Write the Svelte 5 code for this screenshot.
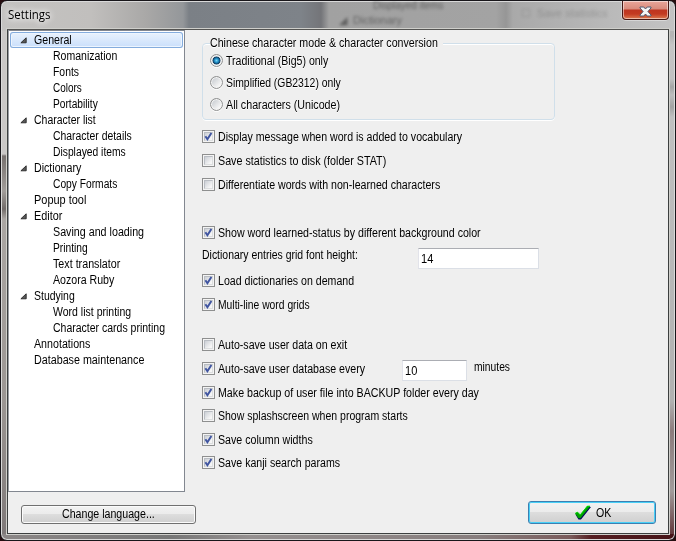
<script>
  const tree = [
    { t: 'General', w: 38, open: true, sel: true },
    { t: 'Romanization', w: 64, sub: true },
    { t: 'Fonts', w: 26, sub: true },
    { t: 'Colors', w: 29, sub: true },
    { t: 'Portability', w: 45, sub: true },
    { t: 'Character list', w: 62, open: true },
    { t: 'Character details', w: 79, sub: true },
    { t: 'Displayed items', w: 73, sub: true },
    { t: 'Dictionary', w: 47, open: true },
    { t: 'Copy Formats', w: 64, sub: true },
    { t: 'Popup tool', w: 52 },
    { t: 'Editor', w: 28, open: true },
    { t: 'Saving and loading', w: 91, sub: true },
    { t: 'Printing', w: 35, sub: true },
    { t: 'Text translator', w: 67, sub: true },
    { t: 'Aozora Ruby', w: 61, sub: true },
    { t: 'Studying', w: 41, open: true },
    { t: 'Word list printing', w: 78, sub: true },
    { t: 'Character cards printing', w: 112, sub: true },
    { t: 'Annotations', w: 56 },
    { t: 'Database maintenance', w: 110 }
  ];
  const modes = [
    { t: 'Traditional (Big5) only', w: 102, on: true },
    { t: 'Simplified (GB2312) only', w: 115 },
    { t: 'All characters (Unicode)', w: 114 }
  ];
  const sections = [
    [
      { t: 'Display message when word is added to vocabulary', w: 244, on: true },
      { t: 'Save statistics to disk (folder STAT)', w: 168 },
      { t: 'Differentiate words with non-learned characters', w: 222 }
    ],
    [
      { t: 'Show word learned-status by different background color', w: 263, on: true },
      { t: 'Dictionary entries grid font height:', w: 156, plain: true, value: '14', vw: 12 },
      { t: 'Load dictionaries on demand', w: 136, on: true },
      { t: 'Multi-line word grids', w: 92, on: true }
    ],
    [
      { t: 'Auto-save user data on exit', w: 129 },
      { t: 'Auto-save user database every', w: 147, on: true, value: '10', vw: 12, unit: 'minutes' },
      { t: 'Make backup of user file into BACKUP folder every day', w: 261, on: true, tight: true },
      { t: 'Show splashscreen when program starts', w: 190 },
      { t: 'Save column widths', w: 95, on: true, tight: true },
      { t: 'Save kanji search params', w: 122, on: true }
    ]
  ];

  // Condenses a label horizontally to its bitmap-font width.
  function fit(node, width) {
    node.style.transform = `scaleX(${width / node.offsetWidth})`;
  }
</script>

{#snippet label(t, w)}
  <span class="label" style="width:{w}px"><span class="ink" use:fit={w}>{t}</span></span>
{/snippet}

<div class="window">
  <header>
    <span class="title">{@render label('Settings', 43)}</span>
    <span class="ghost g1">Displayed items</span>
    <span class="ghost g2">◢&nbsp; Dictionary</span>
    <span class="ghost g3">☐&nbsp; Save statistics</span>
    <button class="close" aria-label="Close">
      <svg width="13" height="11" viewBox="0 0 13 11">
        <path d="M1 1H4.8L6.5 3L8.2 1H12V2L8.9 5.5L12 9V10H8.2L6.5 8L4.8 10H1V9L4.1 5.5L1 2Z" fill="#f5f5f5" stroke="#525a70" stroke-width="1" />
      </svg>
    </button>
  </header>

  <main>
    <aside>
      <ul>
        {#each tree as n}
          <li class:sub={n.sub} class:sel={n.sel}>
            <span class="arrow">
              {#if n.open}
                <svg width="7" height="7" viewBox="0 0 7 7"><path d="M6.2 .8V5.8H.9Z" fill="#595959" stroke="#262626" stroke-width=".9" /></svg>
              {/if}
            </span>
            {@render label(n.t, n.w)}
          </li>
        {/each}
      </ul>
      <div class="langrow">
        <button class="lang">{@render label('Change language...', 93)}</button>
      </div>
    </aside>

    <section class="content">
      <fieldset>
        <legend>{@render label('Chinese character mode & character conversion', 228)}</legend>
        {#each modes as m}
          <div class="radio">
            <i class:on={m.on}></i>
            {@render label(m.t, m.w)}
          </div>
        {/each}
      </fieldset>

      {#each sections as rows}
        <div class="rows">
          {#each rows as r}
            <div class="row" class:plain={r.plain} class:tight={r.tight}>
              {#if !r.plain}
                <span class="box">
                  <i></i>
                  {#if r.on}
                    <svg width="13" height="13" viewBox="0 0 13 13"><path d="M3.4 6.3L5.4 9.2L9.4 3" fill="none" stroke="#4055a0" stroke-width="2" /></svg>
                  {/if}
                </span>
              {/if}
              {@render label(r.t, r.w)}
              {#if r.value}
                <span class="field">{@render label(r.value, r.vw)}</span>
              {/if}
              {#if r.unit}
                <span class="unit">{@render label(r.unit, 36)}</span>
              {/if}
            </div>
          {/each}
        </div>
      {/each}

      <div class="okrow">
        <button class="ok">
          <svg width="18" height="16" viewBox="0 0 18 16">
            <path d="M1.5 9.5L4 8L6.5 10.8L13.5 2H17L7 14.5H4.5Z" fill="#000060" />
            <path d="M1 8.5L3.5 7L6.2 9.8L13.2 1H16.4L6.6 13.3H4.5Z" fill="#00a000" />
            <path d="M1.3 8.3L3.5 7.2L6.2 10L13.3 1.2H16" fill="none" stroke="#00e000" />
          </svg>
          {@render label('OK', 15)}
        </button>
      </div>
    </section>
  </main>
</div>

<style>
  :global(body) {
    margin: 0;
    background: #250d0f;
  }
  * {
    box-sizing: border-box;
  }
  .window {
    width: 676px;
    height: 541px;
    padding: 0 6px 6px;
    display: flex;
    flex-direction: column;
    overflow: hidden;
    position: relative;
    font: 12px/14px 'Liberation Sans', Arial, sans-serif;
    color: #000;
    border: 1px solid #18161a;
    border-radius: 7px;
    box-shadow: inset 0 0 0 1px #d9d9d9;
    background:
      linear-gradient(90deg, #c4c3c1 0, #c1bfbd 90px, #a9a8a7 145px, #94979a 182px, #7b8086 188px, #7e8389 300px, #747579 320px, #a1a1a1 328px, #a3a3a3 495px, #969696 505px, #a9a9a9 512px, #b8b8b8 600px, #c3c3c3 676px) 0 0 / 100% 30px no-repeat,
      linear-gradient(90deg, #8c8787 0, #777 170px, #959090 250px, #877d7d 480px, #7a5b5b 570px, #551e22 590px, #451317 676px) 0 533px / 100% 8px no-repeat,
      linear-gradient(#c9c7c6 0, #c9c7c6 153px, #77716f 155px, #a19d9a 190px, #726c6a 208px, #aaa6a3 218px, #9b9693 400px, #7d7777 541px) 0 0 / 8px 100% no-repeat,
      linear-gradient(#bdbdbd 0, #b4b4b4 35px, #c5c5c5 44px, #c1c1c1 78px, #a5a5a5 86px, #bdbdbd 94px, #a3a3a3 106px, #c0c0c0 116px, #b1b1b1 400px, #8c7c7d 430px, #a19b9b 490px, #57262a 541px);
  }
  header {
    height: 27px;
    flex: none;
    display: flex;
    justify-content: space-between;
  }
  .title {
    padding: 5px 0 0 1px;
    font: 12px/17px 'Open Sans', 'Noto Sans', sans-serif;
    text-shadow: 0 0 6px #fff, 0 0 8px #fff;
  }
  .ghost {
    position: absolute;
    color: #333;
    opacity: 0.6;
    filter: blur(1.4px);
    white-space: nowrap;
  }
  .g1 {
    left: 372px;
    top: 0;
    font-size: 10px;
    line-height: 9px;
  }
  .g2 {
    left: 338px;
    top: 12px;
    font-size: 11px;
  }
  .g3 {
    left: 520px;
    top: 5px;
    font-size: 11px;
    opacity: 0.25;
  }
  .close {
    position: relative;
    width: 47px;
    height: 19px;
    padding: 2px 0 0;
    display: flex;
    justify-content: center;
    align-items: center;
    border: 1px solid #471915;
    border-top: 0;
    border-radius: 0 0 4px 4px;
    background: linear-gradient(#e9a69a 0, #d98b7c 8px, #be3520 9px, #c33a21 13px, #dc7a50 18px);
    box-shadow: inset 0 0 0 1px #ffffff80, 0 0 0 1px #ffffff60;
  }
  main {
    flex: 1;
    display: flex;
    border: 1px solid #3c3f3f;
    border-top-color: #545452;
    box-shadow: 0 0 0 1px #cfcfcb;
    background: #efefef;
    margin: 1px 0 0;
    min-height: 0;
  }
  .label {
    display: inline-block;
    flex: none;
    white-space: nowrap;
    text-align: left;
  }
  .ink {
    display: inline-block;
    transform-origin: 0 0;
  }
  aside {
    width: 177px;
    flex: none;
    display: flex;
    flex-direction: column;
  }
  ul {
    margin: 0;
    height: 462px;
    list-style: none;
    padding: 1px 1px 0;
    background: #fff;
    border: 1px solid #828790;
    border-left-color: #9a9da3;
  }
  li {
    height: 16px;
    display: flex;
    align-items: center;
    padding-left: 9px;
  }
  .arrow {
    width: 14px;
    flex: none;
    display: flex;
    margin-left: 1px;
  }
  .sub .arrow {
    width: 33px;
  }
  .sel {
    border-radius: 3px;
    background: linear-gradient(#ebf3fd, #c8defb);
    box-shadow: inset 0 0 0 1px #84acdd, inset 0 0 0 2px #edf5fe;
  }
  .langrow {
    padding: 13px 0 0 13px;
  }
  button {
    font: inherit;
    color: #000;
  }
  .lang {
    width: 175px;
    height: 19px;
    padding: 0 0 2px;
    border: 1px solid #707070;
    border-radius: 3px;
    box-shadow: inset 0 0 0 1px #fbfbfb;
    background: linear-gradient(#f2f2f2, #ebebeb 50%, #dddddd 50%, #cfcfcf);
    display: flex;
    justify-content: center;
    align-items: center;
  }
  .content {
    flex: 1;
    padding: 6px 12px 0 17px;
  }
  fieldset {
    width: 353px;
    height: 84px;
    margin: 0;
    padding: 3px 7px 0;
    border: 1px solid #d0dfea;
    border-radius: 4px;
    min-width: 0;
    filter: drop-shadow(0 1px 0 #fff);
  }
  legend {
    padding: 0 5px 0 0;
    height: 14px;
  }
  .radio {
    height: 22px;
    display: flex;
    align-items: flex-start;
    gap: 3px;
    padding-top: 1px;
  }
  .radio i {
    width: 13px;
    height: 13px;
    flex: none;
    border-radius: 50%;
    border: 1px solid #8e8f8f;
    box-shadow: inset 0 0 0 1px #f4f4f4;
    background: linear-gradient(135deg, #bfc4ca, #f5f5f5 75%);
  }
  .radio i.on {
    background: radial-gradient(circle at 50% 50%, #79d5f5 0, #218dc4 2px, #123d61 3.6px, #d7dce0 4.3px);
  }
  .rows {
    width: 460px;
    padding-bottom: 24px;
  }
  fieldset + .rows {
    padding-top: 5px;
  }
  .rows:nth-of-type(2) {
    padding-bottom: 16px;
  }
  .row {
    height: 24px;
    display: flex;
    align-items: flex-start;
    gap: 3px;
    padding-top: 5px;
  }
  .row.tight {
    height: 23px;
  }
  .plain {
    padding-top: 3px;
  }
  .box {
    width: 13px;
    height: 13px;
    flex: none;
    display: grid;
    border: 1px solid #8e8f8f;
    background: #f4f4f4;
  }
  .box i {
    grid-area: 1 / 1;
    margin: 1px;
    border: 1px solid #b9bdc3;
    border-right-color: #dcdedf;
    border-bottom-color: #dcdedf;
    background: linear-gradient(135deg, #cbcfd5, #f6f6f6 80%);
  }
  .box svg {
    grid-area: 1 / 1;
    margin: -1px;
    z-index: 1;
  }
  .field {
    height: 21px;
    flex: none;
    padding: 3px 0 0 2px;
    margin: -2px 0 0 34px;
    width: 65px;
    border: 1px solid #dbdfe6;
    border-top-color: #abadb3;
    border-left-color: #e2e3ea;
    background: #fff;
  }
  .plain .field {
    width: 121px;
    margin: 0 0 0 57px;
  }
  .unit {
    margin: -2px 0 0 4px;
  }
  .okrow {
    display: flex;
    justify-content: flex-end;
    padding: 2px 0 0;
    width: 454px;
  }
  .ok {
    width: 128px;
    height: 23px;
    padding: 0;
    border: 1px solid #3c7fb1;
    border-radius: 3px;
    box-shadow: inset 0 0 0 1px #48d0f7;
    background: linear-gradient(#f2f2f2, #ebebeb 50%, #dddddd 50%, #cfcfcf);
    display: flex;
    justify-content: center;
    align-items: center;
    gap: 4px;
  }
</style>
